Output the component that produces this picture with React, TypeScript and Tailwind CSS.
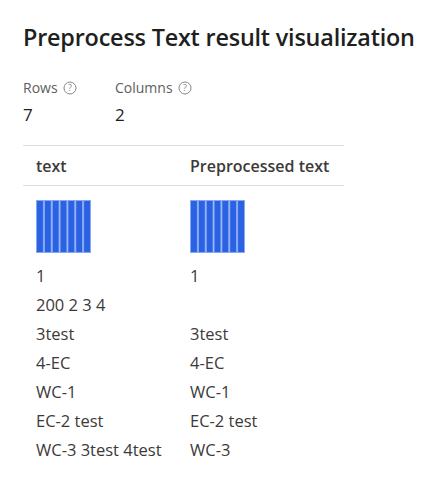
import React from "react";

const font = { fontFamily: '"Open Sans", "Noto Sans", sans-serif' };

function Help() {
  return (
    <svg width="14" height="14" viewBox="0 0 14 14" className="inline-block">
      <circle cx="7" cy="7" r="6" fill="none" stroke="#8a8886" strokeWidth="1" />
      <text x="7" y="10.2" textAnchor="middle" fontSize="9" fill="#8a8886" fontFamily="Open Sans, sans-serif">?</text>
    </svg>
  );
}

function Bars() {
  return (
    <svg width="56" height="54" viewBox="0 0 56 54">
      {Array.from({ length: 7 }).map((_, i) => (
        <rect key={i} x={i * 7.85 + 0.5} y={0.5} width={6.9} height={52} fill="#2a62e3" stroke="#86a9f3" strokeWidth="1" />
      ))}
    </svg>
  );
}

const rows: [string, string][] = [
  ["1", "1"],
  ["200 2 3 4", ""],
  ["3test", "3test"],
  ["4-EC", "4-EC"],
  ["WC-1", "WC-1"],
  ["EC-2 test", "EC-2 test"],
  ["WC-3 3test 4test", "WC-3"],
];

export default function App() {
  return (
    <div className="w-[439px] h-[485px] bg-white pl-[23px] pt-[21px]" style={font}>
      <h1 className="text-[23.4px] leading-[32px] font-semibold text-[#201f1e] tracking-[-0.2px]">
        Preprocess Text result visualization
      </h1>
      <div className="flex mt-[25px]">
        <div className="w-[92px]">
          <div className="flex items-center gap-[5px] text-[14px] leading-[20px] text-[#605e5c]">
            Rows <Help />
          </div>
          <div className="text-[17px] leading-[24px] text-[#201f1e] mt-[5px]">7</div>
        </div>
        <div>
          <div className="flex items-center gap-[5px] text-[14px] leading-[20px] text-[#605e5c]">
            Columns <Help />
          </div>
          <div className="text-[17px] leading-[24px] text-[#201f1e] mt-[5px]">2</div>
        </div>
      </div>
      <div className="w-[321px] mt-[18px] border-t border-[#e1dfdd]">
        <div className="flex h-[40px] items-center border-b border-[#e1dfdd] text-[16px] font-semibold text-[#3b3a39]">
          <div className="w-[154px] pl-[13px]">text</div>
          <div className="pl-[13px]">Preprocessed text</div>
        </div>
        <div className="flex pt-[14px] h-[75px]">
          <div className="w-[154px] pl-[13px]"><Bars /></div>
          <div className="pl-[13px]"><Bars /></div>
        </div>
        {rows.map((r, i) => (
          <div key={i} className={`flex items-center text-[16.5px] text-[#3b3a39] ${i === 0 ? "h-[30px]" : "h-[29px]"}`}>
            <div className="w-[154px] pl-[13px] whitespace-nowrap">{r[0]}</div>
            <div className="pl-[13px] whitespace-nowrap">{r[1]}</div>
          </div>
        ))}
      </div>
    </div>
  );
}
